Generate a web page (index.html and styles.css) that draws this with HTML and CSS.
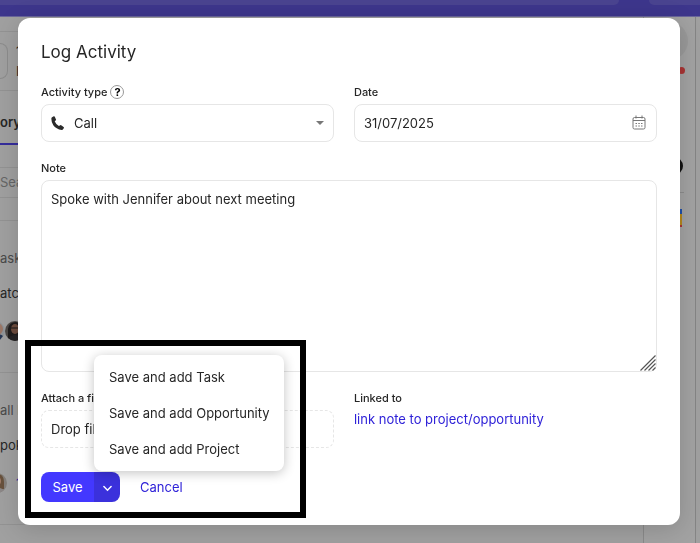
FILE: index.html
```html
<!DOCTYPE html>
<html lang="en">
<head>
    <meta charset="UTF-8">
    <meta name="viewport" content="width=device-width, initial-scale=1.0">
    <title>Log Activity</title>
    <link rel="stylesheet" href="styles.css">
</head>
<body>
    <!-- Page behind the dialog -->
    <div class="page" aria-hidden="true">
        <div class="topbar">
            <div class="topbar_search"></div>
            <div class="topbar_action"></div>
        </div>
        <div class="content">
            <div class="feed">
                <div class="feed_strip"></div>
                <div class="feed_head">
                    <div class="feed_box"></div>
                    <div class="feed_info"><span>1</span><span>I</span></div>
                </div>
                <div class="feed_tabs"><div class="tab">ory</div></div>
                <div class="feed_search">Sea</div>
                <div class="feed_gap"></div>
                <div class="feed_item">
                    <p class="feed_meta">ask</p>
                    <p class="feed_title">atc</p>
                    <div class="avatars">
                        <svg class="avatar avatar_cut" viewBox="0 0 20 20">
                            <circle cx="10" cy="10" r="10" fill="#8f9499"/>
                            <circle cx="12" cy="8" r="6" fill="#9a7767"/>
                            <path d="M6 18q7-7 12-3l-4 5H7z" fill="#263653"/>
                        </svg>
                        <svg class="avatar" viewBox="0 0 20 20">
                            <circle cx="10" cy="10" r="10" fill="#4c4846"/>
                            <path d="M3 17V8q1-7 8-7 6 1 6 8v8z" fill="#1f1c1c"/>
                            <ellipse cx="10" cy="8" rx="4" ry="5" fill="#6d4c3e"/>
                            <path d="M6 7h8" stroke="#191616"/>
                            <path d="M3 17q7-6 14 0-7 6-14 0z" fill="#252325"/>
                        </svg>
                    </div>
                </div>
                <div class="feed_item">
                    <p class="feed_meta">all b</p>
                    <p class="feed_title">pok</p>
                    <div class="avatars">
                        <svg class="avatar avatar_half" viewBox="0 0 20 20">
                            <circle cx="10" cy="10" r="10" fill="#85807c"/>
                            <path d="M4 16V7q2-6 7-6 6 1 6 8v7z" fill="#68513c"/>
                            <ellipse cx="10" cy="8" rx="4" ry="5" fill="#a17b69"/>
                            <path d="M4 17q6-5 13 0-7 6-13 0z" fill="#8c8787"/>
                        </svg>
                        <span class="feed_count">1</span>
                    </div>
                </div>
            </div>
            <div class="side">
                <div class="side_circle"></div>
                <div class="side_dot"></div>
                <div class="side_badge"></div>
                <div class="side_line"></div>
                <div class="side_flag"></div>
            </div>
            <div class="edge"></div>
        </div>
    </div>

    <div class="overlay">
        <form class="modal" role="dialog" aria-labelledby="modal-title">
            <h1 class="modal_title" id="modal-title">Log Activity</h1>

            <div class="row">
                <div class="field">
                    <div class="label_line">
                        <label for="type">Activity type</label>
                        <button class="help" type="button" aria-label="Help">?</button>
                    </div>
                    <div class="control">
                        <svg class="icon_phone" viewBox="0 0 14 14">
                            <path d="M1 1.200 2.800.300q.700-.300 1 .400l1.200 2.700q.300.700-.300 1.100l-1 .800q.900 2.700 4.200 4.700l1.300-.800q.500-.300 1 .1l2.400 1.800q.600.500.200 1.100l-1 1.400q-.400.500-1 .400Q5 13 2.300 9.200.100 6 .400 2.200q.1-.700.600-1z" fill="#2b2b2b"/>
                        </svg>
                        <select class="input input_select" id="type">
                            <option>Call</option>
                        </select>
                        <svg class="icon_caret" viewBox="0 0 8 4"><path d="M0 0h8L4 4z" fill="#777"/></svg>
                    </div>
                </div>
                <div class="field">
                    <label for="date">Date</label>
                    <div class="control">
                        <input class="input" id="date" type="text" value="31/07/2025">
                        <svg class="icon_calendar" viewBox="0 0 14 15" fill="none" stroke="#777">
                            <rect x="1" y="2.500" width="12" height="11.500" rx="1.500"/>
                            <path d="M1 5.500h12M4 .500v3M10 .500v3"/>
                            <path d="M3.500 8.500h1.500M6.300 8.500h1.500M9 8.500h1.500M3.500 11h1.500M6.300 11h1.500M9 11h1.500"/>
                        </svg>
                    </div>
                </div>
            </div>

            <div class="field">
                <label for="note">Note</label>
                <div class="control">
                    <textarea class="input input_note" id="note">Spoke with Jennifer about next meeting</textarea>
                    <svg class="icon_grip" viewBox="0 0 16 16" stroke="#555" stroke-width="1.200" fill="none">
                        <path d="M.500 15.500l15-15M4.500 15.500l11-11M8.500 15.500l7-7M12.500 15.500l3-3"/>
                    </svg>
                </div>
            </div>

            <div class="row">
                <div class="field">
                    <label for="file">Attach a file</label>
                    <label class="drop" for="file">Drop files</label>
                    <input class="file" id="file" type="file">
                </div>
                <div class="field">
                    <span class="label">Linked to</span>
                    <a class="link" href="#">link note to project/opportunity</a>
                </div>
            </div>

            <div class="actions">
                <div class="split">
                    <button class="save" type="button">Save</button>
                    <button class="more" type="button" aria-label="More save options">
                        <svg class="icon_chevron" viewBox="0 0 8 6"><path d="M.800 1.200 4 4.500l3.200-3.300" fill="none" stroke="#fff" stroke-width="1.300" stroke-linecap="round"/></svg>
                    </button>
                    <div class="menu">
                        <button class="menu_item" type="button">Save and add Task</button>
                        <button class="menu_item" type="button">Save and add Opportunity</button>
                        <button class="menu_item" type="button">Save and add Project</button>
                    </div>
                </div>
                <a class="link" href="#">Cancel</a>
            </div>
            <div class="highlight"></div>
        </form>
    </div>
</body>
</html>
```

FILE: styles.css
```css
* {
    box-sizing: border-box;
}
body {
    margin: 0;
    font-family: Inter, "Liberation Sans", sans-serif;
    font-size: 13px;
    line-height: 20px;
    color: #262626;
}
button, input, select, textarea {
    font: inherit;
    color: inherit;
}
p {
    margin: 0;
}

/* Page behind the dialog */
.page {
    display: flex;
    flex-direction: column;
    height: 100vh;
    overflow: hidden;
    background: #a0a0a0;
}
.topbar {
    display: flex;
    flex: none;
    gap: 30px;
    height: 17px;
    background: #3d368c;
    border-bottom: 1px solid #6a669b;
}
.topbar_search, .topbar_action {
    height: 5px;
    background: #4a4490;
}
.topbar_search {
    flex: 1;
    border-radius: 0 0 6px 0;
}
.topbar_action {
    width: 51px;
    border-radius: 0 0 0 6px;
}
.content {
    display: flex;
    flex: 1;
}
.feed {
    flex: 1;
}
.feed > div {
    border-bottom: 1px solid #939393;
}
.feed_strip {
    height: 15px;
}
.feed_head {
    display: flex;
    align-items: center;
    gap: 8px;
    height: 59px;
}
.feed_box {
    width: 8px;
    height: 36px;
    border: 1px solid #8c8c8c;
    border-left: 0;
    border-radius: 0 8px 8px 0;
}
.feed_info {
    display: flex;
    flex-direction: column;
}
.feed_tabs {
    height: 77px;
}
.tab {
    padding-top: 21px;
    height: 54px;
    font-weight: 600;
    border-bottom: 2px solid #352d9c;
}
.feed_search {
    height: 30px;
    line-height: 29px;
    color: #666;
}
.feed_gap {
    height: 23px;
}
.feed_item {
    height: 152px;
    padding-top: 27px;
}
.feed_meta {
    color: #4a4a4a;
}
.feed_title {
    margin-top: 15px;
}
.avatars {
    display: flex;
    align-items: center;
    margin-top: 18px;
}
.avatar {
    width: 20px;
    height: 20px;
}
.avatar_cut {
    margin-left: -15px;
}
.avatar_half {
    margin: 0 9px 0 -13px;
}
.feed_count {
    color: #352d9c;
}
.side {
    width: 52px;
    border-left: 1px solid #8a8a8a;
    background: #a2a2a2;
}
.side_circle {
    width: 38px;
    height: 38px;
    margin: 5px 0 0 6px;
    border-radius: 50%;
    background: #999;
}
.side_dot {
    width: 7px;
    height: 7px;
    margin: 7px 0 0 34px;
    border-radius: 50%;
    background: #a93434;
}
.side_badge {
    width: 18px;
    height: 18px;
    margin: 83px 0 0 21px;
    border-radius: 50%;
    background: #111;
}
.side_line {
    width: 40px;
    height: 1px;
    margin-top: 17px;
    background: #8c8c8c;
}
.side_flag {
    width: 2px;
    height: 18px;
    margin: 16px 0 0 36px;
    background: linear-gradient(#1f4fa8 5px, #b3861c 5px, #b3861c 16px, #a93434 16px);
}
.edge {
    width: 5px;
    border-left: 1px solid #858585;
}

/* Dialog */
.overlay {
    position: fixed;
    inset: 0;
    padding: 18px 20px 18px 18px;
    overflow: hidden;
}
.modal {
    position: relative;
    display: flex;
    flex-direction: column;
    gap: 18px;
    padding: 22px 23px 23px;
    background: #fff;
    border-radius: 12px;
    box-shadow: 0 4px 24px rgba(0, 0, 0, 0.16);
}
.modal_title {
    margin: 0 0 2px;
    font-size: 17px;
    font-weight: 400;
    line-height: 24px;
}
.row {
    display: grid;
    grid-template-columns: 29fr 30fr;
    gap: 20px;
}
.field {
    display: flex;
    flex-direction: column;
    gap: 4px;
    font-size: 11px;
    font-weight: 500;
    line-height: 16px;
}
.label_line {
    display: flex;
    align-items: center;
    gap: 3px;
    height: 16px;
}
.help {
    width: 14px;
    height: 14px;
    padding: 0;
    border: 1px solid #999;
    border-radius: 50%;
    background: #fff;
    color: #000;
    font-weight: 700;
    line-height: 12px;
}
.control {
    position: relative;
    display: flex;
}
.input, .drop {
    width: 100%;
    height: 38px;
    padding: 0 9px;
    border: 1px solid #e6e6e6;
    border-radius: 8px;
    background: #fff;
    font-size: 13px;
    font-weight: 400;
    outline: none;
}
.input_select {
    appearance: none;
    padding-left: 32px;
}
.input_note {
    height: 192px;
    padding: 8px 9px;
    line-height: 20px;
    resize: none;
}
.drop {
    border-style: dashed;
    line-height: 36px;
}
.file {
    position: absolute;
    width: 1px;
    height: 1px;
    opacity: 0;
}
.icon_phone, .icon_caret, .icon_calendar, .icon_grip {
    position: absolute;
    pointer-events: none;
}
.icon_phone {
    top: 12px;
    left: 10px;
    width: 14px;
    height: 14px;
}
.icon_caret {
    top: 17px;
    right: 10px;
    width: 8px;
    height: 4px;
}
.icon_calendar {
    top: 11px;
    right: 11px;
    width: 14px;
    height: 15px;
}
.icon_grip {
    right: 1px;
    bottom: 1px;
    width: 16px;
    height: 16px;
}
.link {
    color: #2f22d8;
    font-size: 13px;
    font-weight: 400;
    line-height: 18px;
    text-decoration: none;
}
.actions {
    display: flex;
    align-items: center;
    gap: 20px;
    margin-top: 6px;
}
.split {
    position: relative;
    display: flex;
    height: 30px;
}
.save, .more {
    padding: 0;
    border: 0;
    color: #fff;
}
.save {
    width: 53px;
    border-radius: 8px 0 0 8px;
    background: #4338ff;
}
.more {
    width: 26px;
    border-radius: 0 8px 8px 0;
    background: #3b31dc;
}
.icon_chevron {
    width: 9px;
    height: 7px;
}
.menu {
    position: absolute;
    bottom: calc(100% + 1px);
    left: 53px;
    display: flex;
    flex-direction: column;
    width: 190px;
    padding: 4px 0;
    border-radius: 8px;
    background: #fff;
    box-shadow: 0 2px 12px rgba(0, 0, 0, 0.24);
}
.menu_item {
    height: 36px;
    padding: 0 15px;
    border: 0;
    background: none;
    text-align: left;
    white-space: nowrap;
}
.highlight {
    position: absolute;
    bottom: 7px;
    left: 7px;
    width: 281px;
    height: 178px;
    border: 6px solid #000;
    pointer-events: none;
}
```
